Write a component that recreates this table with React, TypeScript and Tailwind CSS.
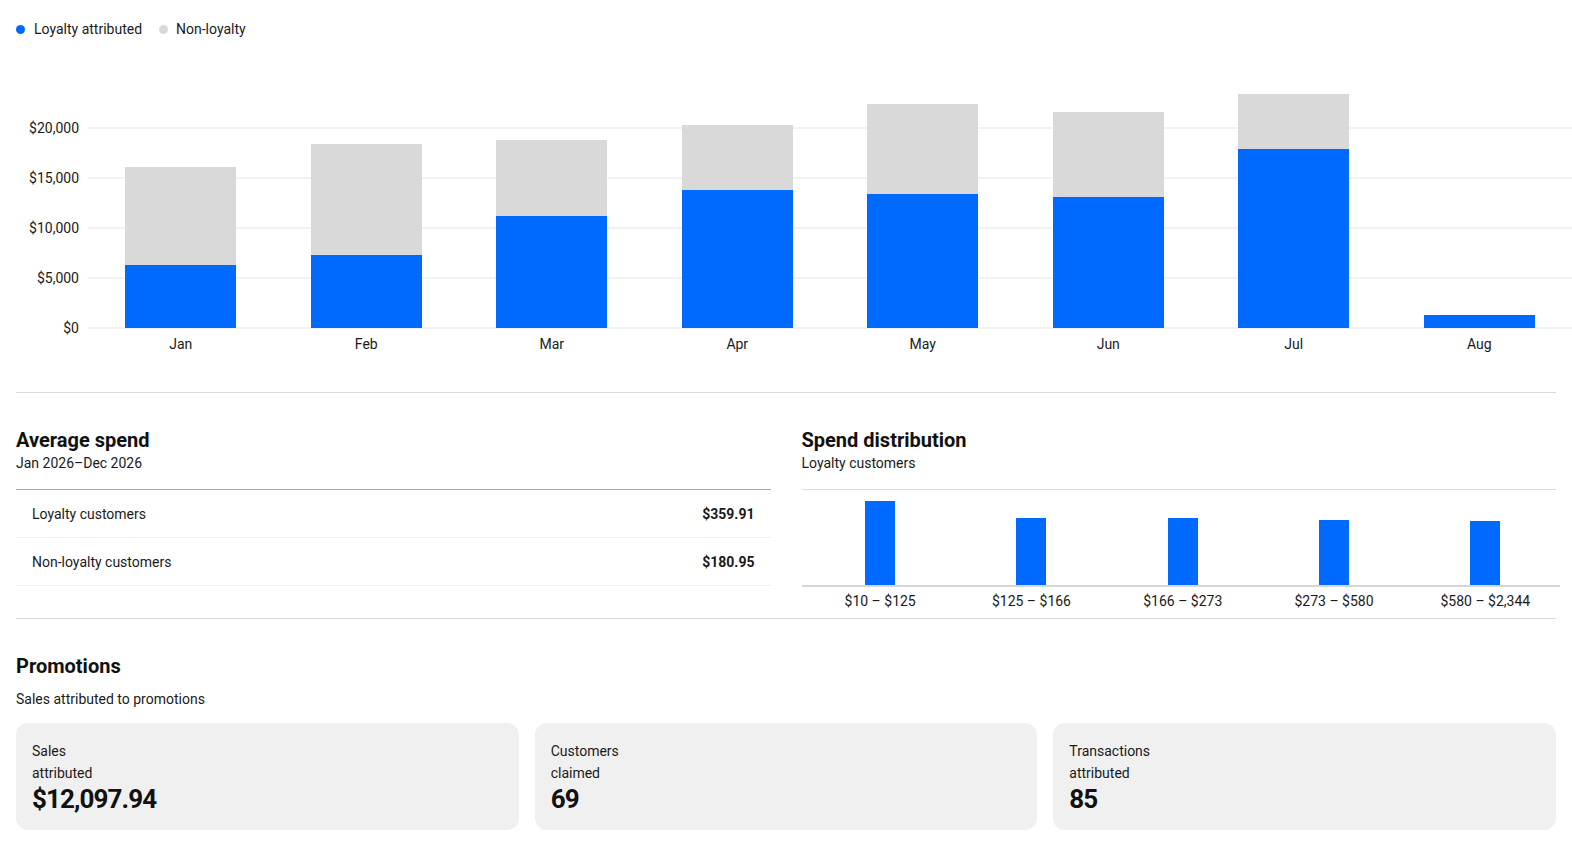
import React from 'react';

const months = [
  { label: 'Jan', total: 16100, loyal: 6300 },
  { label: 'Feb', total: 18400, loyal: 7300 },
  { label: 'Mar', total: 18800, loyal: 11200 },
  { label: 'Apr', total: 20300, loyal: 13800 },
  { label: 'May', total: 22400, loyal: 13400 },
  { label: 'Jun', total: 21600, loyal: 13100 },
  { label: 'Jul', total: 23400, loyal: 17900 },
  { label: 'Aug', total: 1300, loyal: 1300 },
];

// px per dollar: 50px per $5,000
const SCALE = 0.01;

const ticks = [
  { label: '$0', cls: 'bottom-[-1px]' },
  { label: '$5,000', cls: 'bottom-[49px]' },
  { label: '$10,000', cls: 'bottom-[99px]' },
  { label: '$15,000', cls: 'bottom-[149px]' },
  { label: '$20,000', cls: 'bottom-[199px]' },
];

const buckets = [
  { label: '$10 – $125', h: 84 },
  { label: '$125 – $166', h: 67 },
  { label: '$166 – $273', h: 67 },
  { label: '$273 – $580', h: 65 },
  { label: '$580 – $2,344', h: 64 },
];

const promos = [
  { top: 'Sales', bottom: 'attributed', value: '$12,097.94' },
  { top: 'Customers', bottom: 'claimed', value: '69' },
  { top: 'Transactions', bottom: 'attributed', value: '85' },
];

const SectionTitle: React.FC<{ title: string; subtitle: string }> = ({ title, subtitle }) => (
  <div>
    <h3 className="text-[20px] leading-[22px] font-bold text-[#111]">{title}</h3>
    <p className="mt-[2px] text-sm leading-5">{subtitle}</p>
  </div>
);

const MonthlyChart: React.FC = () => (
  <div>
    <div className="relative ml-[88px] mt-[49px] h-[240px]">
      {ticks.map((t) => (
        <div key={t.label} className={`absolute left-0 right-0 h-[2px] bg-[#f2f2f2] ${t.cls}`}>
          <span className="absolute right-full top-1/2 mr-[9px] -translate-y-1/2 text-sm leading-5 whitespace-nowrap">
            {t.label}
          </span>
        </div>
      ))}
      <div className="relative flex h-full items-end">
        {months.map((m) => (
          <div key={m.label} className="flex flex-1 justify-center">
            <div className="flex w-[60%] flex-col">
              <div className="bg-[#d9d9d9]" style={{ height: (m.total - m.loyal) * SCALE }} />
              <div className="bg-[#006aff]" style={{ height: m.loyal * SCALE }} />
            </div>
          </div>
        ))}
      </div>
    </div>
    <div className="ml-[88px] mt-[6px] flex">
      {months.map((m) => (
        <div key={m.label} className="flex-1 text-center text-sm leading-5">
          {m.label}
        </div>
      ))}
    </div>
  </div>
);

export default function App() {
  return (
    <div className="w-full overflow-hidden bg-white text-[#1a1a1a]" style={{ fontFamily: 'Roboto, "Noto Sans", sans-serif' }}>
      {/* Legend */}
      <div className="flex items-center px-4 pt-[19px] text-sm leading-5">
        <span className="h-[9px] w-[9px] rounded-full bg-[#006aff]" />
        <span className="ml-[9px]">Loyalty attributed</span>
        <span className="ml-[17px] h-[9px] w-[9px] rounded-full bg-[#d9d9d9]" />
        <span className="ml-[8px]">Non-loyalty</span>
      </div>

      <MonthlyChart />

      {/* Average spend + distribution */}
      <div className="mx-4 mt-[38px] border-y border-[#dadada] pt-[36px]">
        <div className="grid grid-cols-2 gap-x-[31px]">
          <div>
            <SectionTitle title="Average spend" subtitle="Jan 2026–Dec 2026" />
            <div className="mt-[16px] border-t border-[#a8a8a8]">
              <div className="flex h-[48px] items-center justify-between border-b border-[#efefef] px-4 text-sm">
                <span>Loyalty customers</span>
                <span className="font-bold">$359.91</span>
              </div>
              <div className="flex h-[48px] items-center justify-between border-b border-[#efefef] px-4 text-sm">
                <span>Non-loyalty customers</span>
                <span className="font-bold">$180.95</span>
              </div>
            </div>
          </div>
          <div className="pb-[7px]">
            <SectionTitle title="Spend distribution" subtitle="Loyalty customers" />
            <div className="mt-[16px] border-t border-[#dcdcdc]">
              <div className="flex h-[95px] items-end pl-[3px] mr-[-5px]">
                {buckets.map((b) => (
                  <div key={b.label} className="flex flex-1 justify-center">
                    <div className="w-[30px] bg-[#006aff]" style={{ height: b.h }} />
                  </div>
                ))}
              </div>
              <div className="mr-[-4px] h-[2px] bg-[#d6d6d6]" />
              <div className="mt-[4px] flex pl-[3px] mr-[-5px]">
                {buckets.map((b) => (
                  <div key={b.label} className="flex-1 text-center text-sm leading-5 whitespace-nowrap">
                    {b.label}
                  </div>
                ))}
              </div>
            </div>
          </div>
        </div>
      </div>

      {/* Promotions */}
      <div className="px-4 pt-[36px]">
        <h3 className="text-[20px] leading-[22px] font-bold text-[#111]">Promotions</h3>
        <p className="mt-[12px] text-sm leading-5">Sales attributed to promotions</p>
        <div className="mt-[14px] grid grid-cols-3 gap-4">
          {promos.map((p) => (
            <div key={p.top} className="rounded-xl bg-[#f0f0f0] px-4 pt-[17px] pb-[16px]">
              <div className="text-sm leading-[22px]">
                <div>{p.top}</div>
                <div>{p.bottom}</div>
              </div>
              <div className="text-[26px] leading-[30px] font-bold tracking-[-0.9px] text-[#111]">{p.value}</div>
            </div>
          ))}
        </div>
      </div>
    </div>
  );
}
